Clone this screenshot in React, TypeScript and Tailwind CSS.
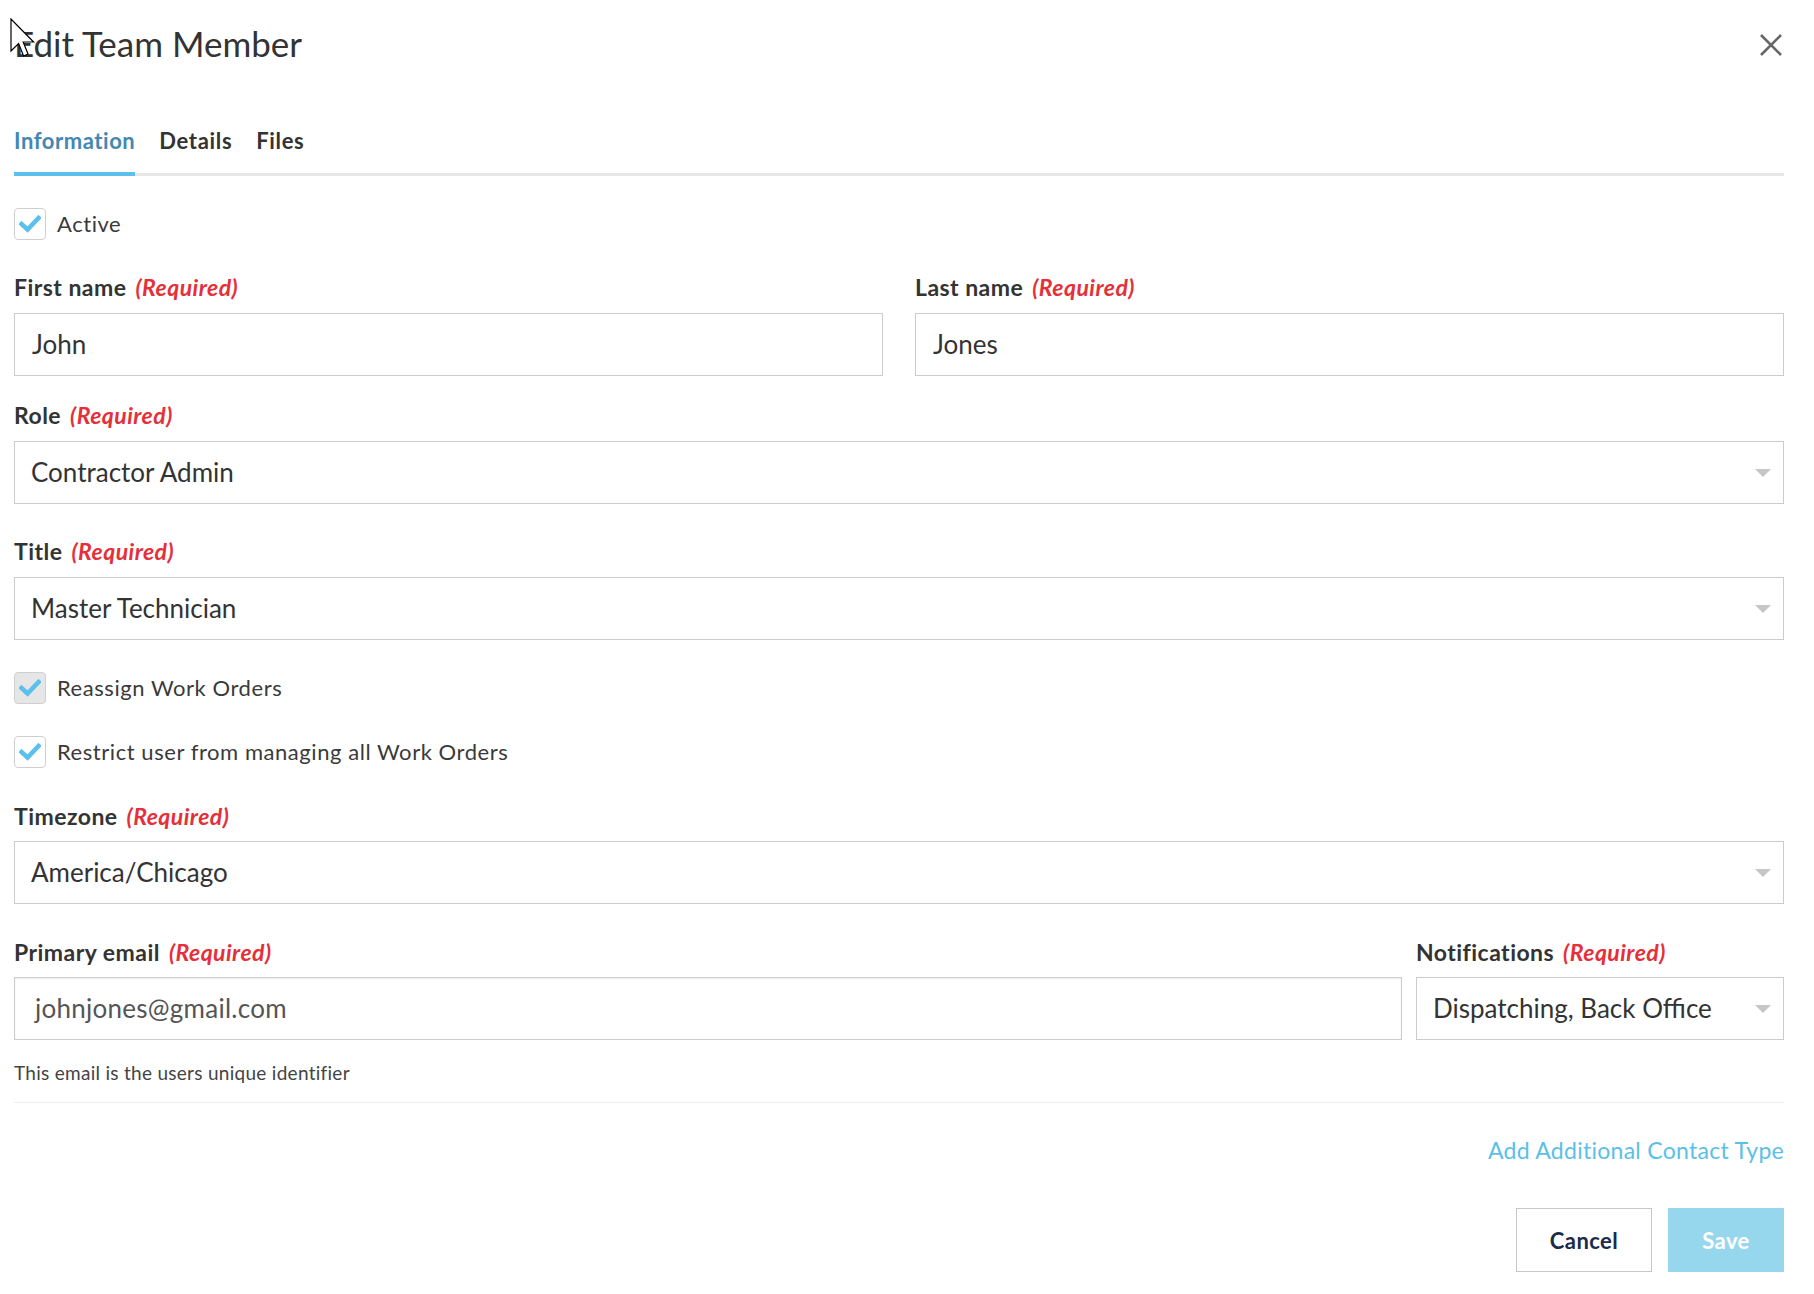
import React from "react";

const font = { fontFamily: "Lato, 'Noto Sans', sans-serif" };

function Check() {
  return (
    <svg width="22" height="18" viewBox="0 0 22 18" className="block">
      <polyline points="2.5,9 8.5,14.5 19.5,3" fill="none" stroke="#5bc0eb" strokeWidth="4.5" strokeLinecap="square" />
    </svg>
  );
}

function CheckRow({ label, disabled, className }: { label: string; disabled?: boolean; className?: string }) {
  return (
    <div className={"flex items-center " + (className ?? "")}>
      <div
        className={
          "w-[32px] h-[32px] rounded-[4px] border border-[#cfcfcf] flex items-center justify-center " +
          (disabled ? "bg-[#e6e6e6]" : "bg-white")
        }
      >
        <Check />
      </div>
      <span className="ml-[11px] text-[22px] leading-[32px] tracking-[0.025em] text-[#3a3a3a]">{label}</span>
    </div>
  );
}

function Label({ text, className }: { text: string; className?: string }) {
  return (
    <div className={"flex items-baseline text-[23px] leading-[26px] font-bold tracking-[0.02em] " + (className ?? "")}>
      <span className="text-[#333333]">{text}</span>
      <span className="ml-[9px] italic text-[#e5303a]">(Required)</span>
    </div>
  );
}

function TextInput({ value, className, email }: { value: string; className?: string; email?: boolean }) {
  return (
    <div
      className={
        "h-[63px] border border-[#cccccc] flex items-center bg-white " +
        (email
          ? "pl-[20px] shadow-[inset_0_1px_2px_rgba(0,0,0,0.08)] text-[#555555] tracking-[0.01em]"
          : "pl-[17px] text-[#333333]") +
        " text-[26px] " +
        (className ?? "")
      }
    >
      {value}
    </div>
  );
}

function Caret() {
  return (
    <svg width="16" height="8" viewBox="0 0 16 8" className="block">
      <polygon points="0,0 16,0 8,8" fill="#c6c6c6" />
    </svg>
  );
}

function Select({ value, className }: { value: string; className?: string }) {
  return (
    <div
      className={
        "h-[63px] border border-[#cccccc] flex items-center justify-between pl-[16px] pr-[12px] bg-white text-[26px] text-[#333333] " +
        (className ?? "")
      }
    >
      <span>{value}</span>
      <Caret />
    </div>
  );
}

export default function App() {
  return (
    <div className="relative w-[1814px] h-[1294px] bg-white pl-[14px]" style={font}>
      <div className="w-[1770px]">
        {/* Header */}
        <div className="flex items-start justify-between">
          <h1 className="pt-[22px] text-[35px] leading-[42px] font-normal text-[#333333]">Edit Team Member</h1>
          <button className="mt-[34px] mr-[2px]" aria-label="Close">
            <svg width="22" height="22" viewBox="0 0 22 22" className="block">
              <line x1="1" y1="1" x2="21" y2="21" stroke="#666666" strokeWidth="2.6" />
              <line x1="21" y1="1" x2="1" y2="21" stroke="#666666" strokeWidth="2.6" />
            </svg>
          </button>
        </div>

        {/* Tabs */}
        <div className="mt-[62px] flex gap-[24px] border-b-[3px] border-[#e7e7e7]">
          <div className="relative pt-[2px] pb-[19px] text-[22px] leading-[26px] font-bold tracking-[0.025em] text-[#4387b2]">
            Information
            <div className="absolute left-0 right-0 -bottom-[3px] h-[4px] bg-[#5bc0eb]" />
          </div>
          <div className="pt-[2px] pb-[19px] text-[22px] leading-[26px] font-bold tracking-[0.03em] text-[#333333]">Details</div>
          <div className="pt-[2px] pb-[19px] text-[22px] leading-[26px] font-bold tracking-[0.03em] text-[#333333]">Files</div>
        </div>

        <CheckRow label="Active" className="mt-[32px]" />

        {/* Names */}
        <div className="mt-[34px] grid grid-cols-2 gap-[32px]">
          <div>
            <Label text="First name" />
            <TextInput value="John" className="mt-[13px]" />
          </div>
          <div>
            <Label text="Last name" />
            <TextInput value="Jones" className="mt-[13px]" />
          </div>
        </div>

        <Label text="Role" className="mt-[26px]" />
        <Select value="Contractor Admin" className="mt-[13px]" />

        <Label text="Title" className="mt-[34px]" />
        <Select value="Master Technician" className="mt-[13px]" />

        <CheckRow label="Reassign Work Orders" disabled className="mt-[32px]" />
        <CheckRow label="Restrict user from managing all Work Orders" className="mt-[32px]" />

        <Label text="Timezone" className="mt-[35px]" />
        <Select value="America/Chicago" className="mt-[12px]" />

        <div className="mt-[35px] flex gap-[14px]">
          <div className="flex-1">
            <Label text="Primary email" />
            <TextInput value="johnjones@gmail.com" email className="mt-[12px]" />
          </div>
          <div className="w-[368px]">
            <Label text="Notifications" />
            <Select value="Dispatching, Back Office" className="mt-[12px]" />
          </div>
        </div>

        <div className="mt-[22px] text-[19px] leading-[22px] tracking-[0.015em] text-[#444444]">
          This email is the users unique identifier
        </div>
        <div className="mt-[18px] h-px bg-[#eeeeee]" />

        <div className="mt-[33px] flex justify-end">
          <a className="text-[23px] leading-[28px] tracking-[0.012em] text-[#5bc0e8] cursor-pointer">Add Additional Contact Type</a>
        </div>

        <div className="mt-[44px] flex justify-end gap-[16px]">
          <button className="w-[136px] h-[64px] border border-[#c8c8c8] bg-white text-[22px] font-bold tracking-[0.02em] text-[#1b2b4b]">
            Cancel
          </button>
          <button className="w-[116px] h-[64px] bg-[#97d7ee] text-[22px] font-bold tracking-[0.02em] text-white">Save</button>
        </div>
      </div>

      {/* Mouse cursor overlay */}
      <svg className="absolute left-[10px] top-[18px]" width="28" height="42" viewBox="0 0 14 21">
        <path d="M0.5,0.5 L0.5,16.5 L4.3,12.8 L6.8,19 L9,18 L6.6,12 L11.8,12 Z" fill="#ffffff" stroke="#000000" strokeWidth="0.6" strokeLinejoin="miter" />
      </svg>
    </div>
  );
}
